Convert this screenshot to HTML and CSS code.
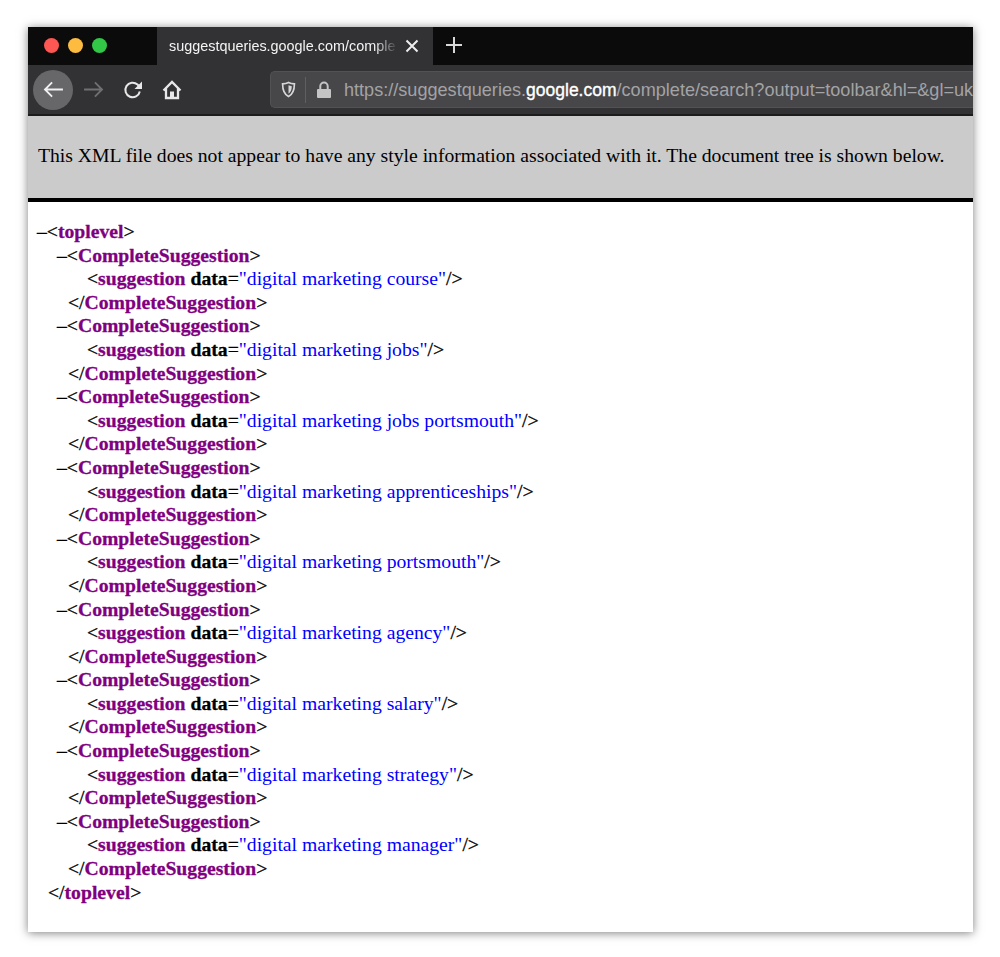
FILE: index.html
```html
<!DOCTYPE html>
<html lang="en">
<head>
<meta charset="utf-8">
<title>XML suggestions</title>
<link rel="stylesheet" href="styles.css">
</head>
<body>
<div class="window">
  <div class="tabstrip">
    <div class="lights"><i class="light red"></i><i class="light yellow"></i><i class="light green"></i></div>
    <div class="tab"><span class="tab-title">suggestqueries.google.com/comple</span>
      <svg class="tab-close" viewBox="0 0 14 14"><path d="M1.500 1.500l11 11M12.500 1.500l-11 11"/></svg>
    </div>
    <svg class="newtab" viewBox="0 0 18 18"><path d="M9 1v16M1 9h16"/></svg>
  </div>
  <div class="toolbar">
    <div class="navbtn back"><svg viewBox="0 0 22 18"><path d="M21 9H2M9.500 1.500L2 9l7.500 7.500"/></svg></div>
    <svg class="ico fwd" viewBox="0 0 22 18"><path d="M1 9h19M12.500 1.500L20 9l-7.500 7.500"/></svg>
    <svg class="ico reload" viewBox="0 0 20 20"><path d="M16.800 11.500A7.300 7.300 0 1 1 14.500 4.500L17 7"/><path class="fill" d="M19 1.500v7.500h-7.500z"/></svg>
    <svg class="ico home" viewBox="0 0 20 20"><path d="M1.500 10.500L10 2l8.500 8.500M4 8.500V18h12V8.500"/><path class="fill" d="M8 11.500h4V18H8z"/></svg>
    <div class="urlbar">
      <svg class="shield" viewBox="0 0 16 18"><path d="M8 1.500c2 1 4 1.400 6.300 1.500 0 6-1 10.500-6.300 13.500C2.700 13.500 1.700 9 1.700 3 4 2.900 6 2.500 8 1.500z"/><path class="fill" d="M8 4.500c1.200.5 2.300.8 3.500.9 0 3.500-.8 6.200-3.500 8z"/></svg>
      <span class="sep"></span>
      <svg class="lock" viewBox="0 0 16 18"><path class="fill" d="M2 8h12a1 1 0 0 1 1 1v7a1 1 0 0 1-1 1H2a1 1 0 0 1-1-1V9a1 1 0 0 1 1-1z"/><path class="shackle" d="M4.300 8V5.200a3.700 3.700 0 0 1 7.400 0V8"/></svg>
      <span class="url">https://suggestqueries.<b>google.com</b>/complete/search?output=toolbar&amp;hl=&amp;gl=uk</span>
    </div>
  </div>
  <div class="infobar">This XML file does not appear to have any style information associated with it. The document tree is shown below.</div>
  <div class="tree">
    <div class="line">–&lt;<span class="t">toplevel</span>&gt;</div>
    <div class="group">
      <div class="line l1">–&lt;<span class="t">CompleteSuggestion</span>&gt;</div>
      <div class="line l2">&lt;<span class="t">suggestion</span> <b>data</b>=<span class="v">"digital marketing course"</span>/&gt;</div>
      <div class="line l3">&lt;/<span class="t">CompleteSuggestion</span>&gt;</div>
      <div class="line l1">–&lt;<span class="t">CompleteSuggestion</span>&gt;</div>
      <div class="line l2">&lt;<span class="t">suggestion</span> <b>data</b>=<span class="v">"digital marketing jobs"</span>/&gt;</div>
      <div class="line l3">&lt;/<span class="t">CompleteSuggestion</span>&gt;</div>
      <div class="line l1">–&lt;<span class="t">CompleteSuggestion</span>&gt;</div>
      <div class="line l2">&lt;<span class="t">suggestion</span> <b>data</b>=<span class="v">"digital marketing jobs portsmouth"</span>/&gt;</div>
      <div class="line l3">&lt;/<span class="t">CompleteSuggestion</span>&gt;</div>
      <div class="line l1">–&lt;<span class="t">CompleteSuggestion</span>&gt;</div>
      <div class="line l2">&lt;<span class="t">suggestion</span> <b>data</b>=<span class="v">"digital marketing apprenticeships"</span>/&gt;</div>
      <div class="line l3">&lt;/<span class="t">CompleteSuggestion</span>&gt;</div>
      <div class="line l1">–&lt;<span class="t">CompleteSuggestion</span>&gt;</div>
      <div class="line l2">&lt;<span class="t">suggestion</span> <b>data</b>=<span class="v">"digital marketing portsmouth"</span>/&gt;</div>
      <div class="line l3">&lt;/<span class="t">CompleteSuggestion</span>&gt;</div>
      <div class="line l1">–&lt;<span class="t">CompleteSuggestion</span>&gt;</div>
      <div class="line l2">&lt;<span class="t">suggestion</span> <b>data</b>=<span class="v">"digital marketing agency"</span>/&gt;</div>
      <div class="line l3">&lt;/<span class="t">CompleteSuggestion</span>&gt;</div>
      <div class="line l1">–&lt;<span class="t">CompleteSuggestion</span>&gt;</div>
      <div class="line l2">&lt;<span class="t">suggestion</span> <b>data</b>=<span class="v">"digital marketing salary"</span>/&gt;</div>
      <div class="line l3">&lt;/<span class="t">CompleteSuggestion</span>&gt;</div>
      <div class="line l1">–&lt;<span class="t">CompleteSuggestion</span>&gt;</div>
      <div class="line l2">&lt;<span class="t">suggestion</span> <b>data</b>=<span class="v">"digital marketing strategy"</span>/&gt;</div>
      <div class="line l3">&lt;/<span class="t">CompleteSuggestion</span>&gt;</div>
      <div class="line l1">–&lt;<span class="t">CompleteSuggestion</span>&gt;</div>
      <div class="line l2">&lt;<span class="t">suggestion</span> <b>data</b>=<span class="v">"digital marketing manager"</span>/&gt;</div>
      <div class="line l3">&lt;/<span class="t">CompleteSuggestion</span>&gt;</div>
    </div>
    <div class="line l0">&lt;/<span class="t">toplevel</span>&gt;</div>
  </div>
</div>
</body>
</html>
```
FILE: styles.css
```css
html, body { margin: 0; padding: 0; background: #fff; height: 957px; overflow: hidden; }
body { padding: 27px 27px 25px 28px; box-sizing: border-box; }
.window {
  height: 905px;
  background: #fff;
  display: flex;
  flex-direction: column;
  overflow: hidden;
  box-shadow: 0 1px 9px rgba(0,0,0,.5);
}
.tabstrip {
  height: 38px;
  flex: none;
  background: #0b0b0c;
  display: flex;
  align-items: stretch;
}
.lights { width: 129px; display: flex; align-items: center; gap: 9px; padding-left: 16px; box-sizing: border-box; padding-bottom: 2px; }
.light { width: 15px; height: 15px; border-radius: 50%; display: block; }
.red { background: #fc5753; }
.yellow { background: #fdbc40; }
.green { background: #33c748; }
.tab {
  width: 276px;
  background: #323234;
  display: flex;
  align-items: center;
  padding-left: 12px;
  box-sizing: border-box;
}
.tab-title {
  width: 229px;
  overflow: hidden;
  white-space: nowrap;
  font: 14.400px/20px "Liberation Sans", Arial, sans-serif;
  color: #f4f4f4;
  -webkit-mask-image: linear-gradient(to right, #000 205px, transparent 229px);
  mask-image: linear-gradient(to right, #000 205px, transparent 229px);
}
.tab-close { width: 14px; height: 14px; margin-left: 7px; fill: none; stroke: #eee; stroke-width: 2; }
.newtab { width: 18px; height: 18px; margin: 9px 0 0 12px; fill: none; stroke: #d8d8d8; stroke-width: 2; }
.toolbar {
  height: 51px;
  box-sizing: border-box;
  flex: none;
  background: #323234;
  display: flex;
  align-items: center;
  border-bottom: 2px solid #1c1c1d;
  padding-left: 5px;
}
.navbtn.back {
  width: 40px; height: 40px; border-radius: 50%;
  background: #67676a;
  display: flex; align-items: center; justify-content: center;
}
.navbtn svg { width: 21px; height: 17px; fill: none; stroke: #f0f0f0; stroke-width: 2; }
.ico { fill: none; stroke: #e8e8e8; stroke-width: 2; flex: none; }
.ico .fill { fill: #e8e8e8; stroke: none; }
.fwd { width: 21px; height: 17px; margin-left: 10px; stroke: #707072; }
.reload { width: 20px; height: 20px; margin-left: 19px; }
.home { width: 20px; height: 20px; margin-left: 19px; stroke-width: 2.300; }
.urlbar {
  margin-left: 88px;
  flex: 1;
  height: 37px;
  background: #47474a;
  border: 1px solid #525255;
  border-right: 0;
  border-radius: 5px 0 0 5px;
  display: flex;
  align-items: center;
  overflow: hidden;
  box-sizing: border-box;
  padding-left: 10px;
}
.shield { width: 15px; height: 17px; flex: none; fill: none; stroke: #d6d6d6; stroke-width: 1.800; }
.shield .fill { fill: #d6d6d6; stroke: none; }
.sep { width: 1px; height: 26px; background: #5f5f62; margin: 0 10px 0 9px; flex: none; }
.lock { width: 16px; height: 18px; flex: none; }
.lock .fill { fill: #c4c4c4; }
.lock .shackle { fill: none; stroke: #c4c4c4; stroke-width: 2; }
.url {
  margin-left: 12px;
  white-space: nowrap;
  font: 18.100px/24px "Liberation Sans", Arial, sans-serif;
  color: #a3a3a5;
}
.url b { font-weight: 400; font-size: 17.500px; color: #fff; -webkit-text-stroke: .35px #fff; }
.infobar {
  flex: none;
  height: 78px;
  background: #cbcbcb;
  border-bottom: 4px solid #000;
  display: flex;
  align-items: center;
  padding: 0 0 4px 10px;
  box-sizing: content-box;
  font: 19.670px/24px "Liberation Serif", "Times New Roman", serif;
  color: #000;
  white-space: nowrap;
}
.tree {
  padding: 18px 0 0 9px;
  font: 19.680px/23.600px "Liberation Serif", "Times New Roman", serif;
  color: #000;
}
.line { white-space: nowrap; -webkit-text-stroke: .3px; }
.l0 { padding-left: 11px; }
.l1 { padding-left: 20px; }
.l2 { padding-left: 50px; }
.l3 { padding-left: 31px; }
.t { color: #800080; font-weight: 700; }
.line b { font-weight: 700; color: #000; }
.v { color: #0000ff; -webkit-text-stroke: 0; }
```
